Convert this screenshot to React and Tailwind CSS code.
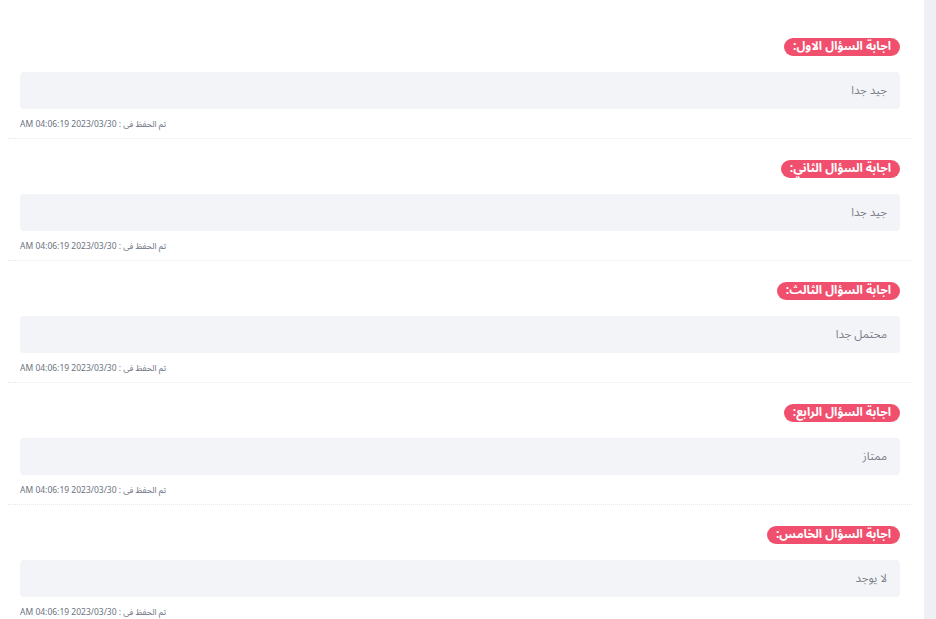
import React from 'react';

const answers = [
  { label: 'اجابة السؤال الاول:', value: 'جيد جدا' },
  { label: 'اجابة السؤال الثاني:', value: 'جيد جدا' },
  { label: 'اجابة السؤال الثالث:', value: 'محتمل جدا' },
  { label: 'اجابة السؤال الرابع:', value: 'ممتاز' },
  { label: 'اجابة السؤال الخامس:', value: 'لا يوجد' },
];

const AnswerItem = ({ label, value }) => (
  <div className="pt-[21px] pb-[7px] px-3 border-b border-dotted border-[#e8e9ee]">
    {/* Question badge */}
    <div className="flex justify-end">
      <span
        dir="rtl"
        className="h-[18px] px-[9px] flex items-center rounded-full bg-[#f0506e] text-white text-[12px] font-bold leading-none tracking-[0.2px]"
      >
        {label}
      </span>
    </div>

    {/* Answer box */}
    <div
      dir="rtl"
      className="mt-4 h-[37px] flex items-center px-[13px] rounded bg-[#f3f4f8] text-[11.5px] text-[#7b7f8a]"
    >
      {value}
    </div>

    {/* Saved at */}
    <div className="mt-2 flex justify-start">
      <span dir="rtl" className="text-[8.5px] leading-[14px] text-[#6b7280]">
        تم الحفظ فى : 2023/03/30 04:06:19 AM
      </span>
    </div>
  </div>
);

export default function App() {
  return (
    <div
      className="w-[936px] h-[619px] overflow-hidden flex bg-white"
      style={{ fontFamily: '"Noto Sans Arabic", "Noto Naskh Arabic", "DejaVu Sans", sans-serif' }}
    >
      <div className="flex-1 bg-white px-2 pt-[17px] pr-[12px]">
        {answers.map((a, i) => (
          <AnswerItem key={i} label={a.label} value={a.value} />
        ))}
      </div>
      <div className="w-[12px] bg-[#eef0f5]" />
    </div>
  );
}
